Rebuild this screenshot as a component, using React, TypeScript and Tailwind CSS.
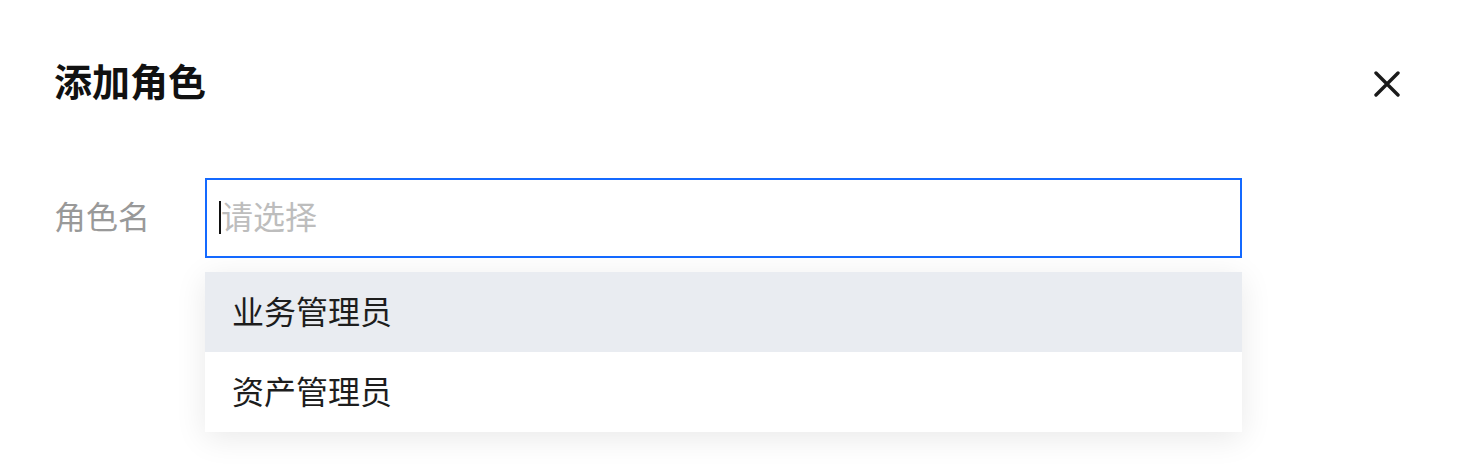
const font = `font-["PingFang_SC","Noto_Sans_CJK_SC",sans-serif]`;

const roles = ["业务管理员", "资产管理员"];

function CloseIcon() {
  return (
    <svg width="26" height="26" viewBox="0 0 26 26" fill="none" className="text-[#1a1a1a]">
      <path d="M2 2L24 24M24 2L2 24" stroke="currentColor" strokeWidth="3.4" strokeLinecap="round" />
    </svg>
  );
}

export default function App() {
  return (
    <div className={`h-[471px] w-[1459px] overflow-hidden bg-white pl-[54px] pr-[59px] ${font}`}>
      <div className="mt-[60px] flex h-[48px] items-center justify-between">
        <h2 className="pb-[8px] text-[38px] font-bold leading-none text-[#111]">添加角色</h2>
        <button type="button" className="flex h-[26px] w-[26px] items-center justify-center">
          <CloseIcon />
        </button>
      </div>

      <div className="mt-[70px] flex items-center">
        <label className="w-[151px] pb-[6px] text-[32px] leading-none text-[#999]">角色名</label>
        <div className="flex h-[80px] w-[1037px] items-center border-2 border-[#1469ff] bg-white pl-[12px]">
          <span className="mb-[2px] h-[33px] w-[2px] bg-[#111]" />
          <span className="pb-[6px] text-[32px] leading-none text-[#bdbdbd]">请选择</span>
        </div>
      </div>

      <div className="ml-[151px] mt-[14px] w-[1037px] bg-white shadow-[0_6px_30px_rgba(0,0,0,0.09)]">
        {roles.map((role, i) => (
          <div
            key={role}
            className={`flex h-[80px] items-center px-[27px] pb-[5px] text-[32px] leading-none text-[#1d1d1d] ${
              i === 0 ? "bg-[#e9ecf1]" : "bg-white"
            }`}
          >
            {role}
          </div>
        ))}
      </div>
    </div>
  );
}
